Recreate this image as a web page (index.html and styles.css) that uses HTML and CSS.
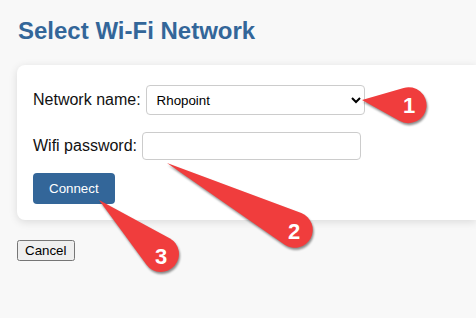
FILE: index.html
```html
<!DOCTYPE html>
<html>
<head>
<meta charset="utf-8">
<link rel="stylesheet" href="styles.css">
</head>
<body>
<h1 class="title">Select Wi-Fi Network</h1>
<form class="card">
  <div class="row row-select">
    <label class="label" for="ssid">Network name:</label>
    <select class="field select" id="ssid"><option>Rhopoint</option></select>
  </div>
  <div class="row row-pass">
    <label class="label" for="pw">Wifi password:</label>
    <input class="field input" id="pw" type="password">
  </div>
  <button class="connect" type="button">Connect</button>
</form>
<button class="cancel" type="button">Cancel</button>

<svg class="callouts" width="476" height="318" viewBox="0 0 476 318" aria-hidden="true">
  <g class="drop">
    <path d="M362 100 L403.6 87.9 A18 18 0 1 1 399.4 120.7 Z"/>
    <path d="M167 163 L301.3 213.1 A18 18 0 1 1 284.7 244.8 Z"/>
    <path d="M99 200 L169.6 238.2 A18 18 0 1 1 146.5 264.7 Z"/>
  </g>
  <g class="nums">
    <text x="409" y="113">1</text>
    <text x="294" y="239">2</text>
    <text x="161" y="264">3</text>
  </g>
</svg>
</body>
</html>
```

FILE: styles.css
```css
html {
  overflow: hidden;
}
body {
  margin: 0;
  padding: 17px 0 0 17px;
  background: #f8f8f8;
  font-family: Arial, "Liberation Sans", sans-serif;
}
.title {
  margin: 0 0 20px 1px;
  font-size: 24px;
  line-height: 28px;
  font-weight: bold;
  color: #336699;
}
.card {
  background: #fff;
  border-radius: 8px 0 0 8px;
  box-shadow: 0 2px 8px rgba(0, 0, 0, 0.12);
  padding: 20px 16px 16px 16px;
  margin: 0 0 20px 0;
}
.row {
  display: flex;
  align-items: center;
  gap: 5px;
}
.row-select {
  margin-bottom: 17px;
}
.row-pass {
  margin-bottom: 13px;
}
.label {
  font-size: 16px;
  color: #111;
}
.field {
  box-sizing: border-box;
  width: 219px;
  border: 1px solid #ccc;
  border-radius: 4px;
  background: #fff;
  font-family: Arial, "Liberation Sans", sans-serif;
  font-size: 13.333px;
  color: #000;
}
.select {
  height: 30px;
  padding: 0 6px;
}
.input {
  height: 28px;
  padding: 0 6px;
}
.connect {
  display: block;
  height: 31px;
  padding: 0 16px;
  border: none;
  border-radius: 4px;
  background: #336699;
  color: #fff;
  font-family: Arial, "Liberation Sans", sans-serif;
  font-size: 13.333px;
}
.cancel {
  font-family: Arial, "Liberation Sans", sans-serif;
  font-size: 13.333px;
}
.callouts {
  position: absolute;
  left: 0;
  top: 0;
  pointer-events: none;
}
.drop path {
  fill: #f03d3d;
  filter: drop-shadow(1px 2px 1px rgba(0, 0, 0, 0.45));
}
.nums text {
  fill: #fff;
  font-family: Arial, "Liberation Sans", sans-serif;
  font-weight: bold;
  font-size: 22px;
  text-anchor: middle;
}
```
